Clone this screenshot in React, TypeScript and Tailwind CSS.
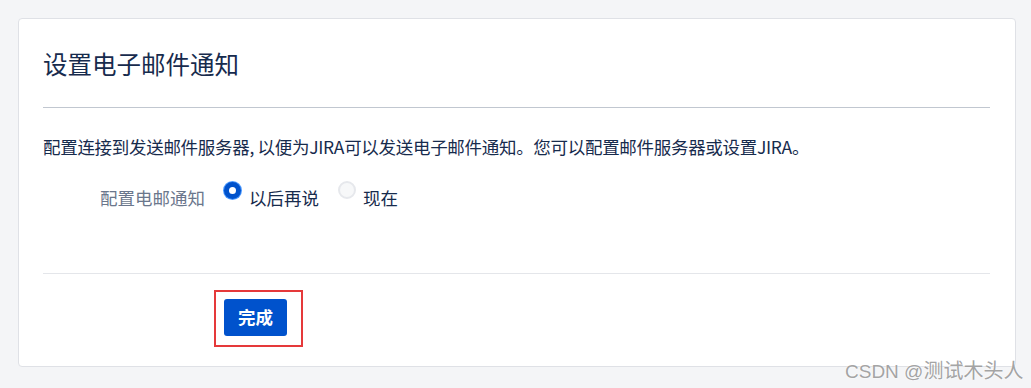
import React, { useState } from 'react';

const font = { fontFamily: '"Noto Sans CJK SC", "Noto Sans", sans-serif' };

const Radio: React.FC<{ checked: boolean; label: string; onClick: () => void }> = ({ checked, label, onClick }) => (
  <label className="flex items-start cursor-pointer" onClick={onClick}>
    <span
      className={
        checked
          ? 'mt-[-3px] flex h-[17px] w-[17px] items-center justify-center rounded-full bg-[#0052cc] shadow-[0_0_0_1px_#4c9aff]'
          : 'mt-[-4px] h-[18px] w-[18px] rounded-full border-2 border-[#e6e8ec] bg-[#f7f8f9]'
      }
    >
      {checked && <span className="h-[7px] w-[7px] rounded-full bg-white" />}
    </span>
    <span className={checked ? 'ml-[8px] text-[#172b4d]' : 'ml-[7px] text-[#172b4d]'}>{label}</span>
  </label>
);

export default function App() {
  const [later, setLater] = useState(true);

  return (
    <div className="relative h-[388px] w-full bg-[#f4f5f7] pt-[18px] pl-[18px] pr-[15px]" style={font}>
      <div className="h-[349px] rounded-[4px] border border-[#dfe1e6] bg-white pl-[24px] pr-[25px] pt-[27px]">
        <h1 className="text-[24.5px] leading-[36px] font-normal text-[#172b4d]">设置电子邮件通知</h1>
        <div className="mt-[25px] h-px bg-[#c1c7d0]" />

        <p className="mt-[26px] text-[17.5px] leading-[26px] tracking-[-0.3px] text-[#172b4d]">
          配置连接到发送邮件服务器, 以便为JIRA可以发送电子邮件通知。您可以配置邮件服务器或设置JIRA。
        </p>

        <div className="mt-[25px] flex items-start text-[17.5px] leading-[26px]">
          <div className="w-[162px] text-right text-[#6b778c]">配置电邮通知</div>
          <div className="ml-[19px] flex items-start gap-[19px]">
            <Radio checked={later} label="以后再说" onClick={() => setLater(true)} />
            <Radio checked={!later} label="现在" onClick={() => setLater(false)} />
          </div>
        </div>

        <div className="mt-[62px] h-px bg-[#e4e6ea]" />

        <div className="mt-[16px] ml-[171px] inline-block border-2 border-[#e5393a] pl-[8px] pr-[14px] pt-[7px] pb-[9px]">
          <button className="h-[37px] w-[63px] rounded-[3px] bg-[#0052cc] text-[17.5px] font-bold text-white">
            完成
          </button>
        </div>
      </div>

      <div
        className="absolute left-[845px] top-[358px] text-[19px] leading-[26px] text-[#8c8c8c]/80 [text-shadow:0_0_2px_#fff]"
        style={{ fontFamily: '"Liberation Sans", "Noto Sans CJK SC", sans-serif' }}
      >
        CSDN @<span className="text-[20px]">测试木头人</span>
      </div>
    </div>
  );
}
